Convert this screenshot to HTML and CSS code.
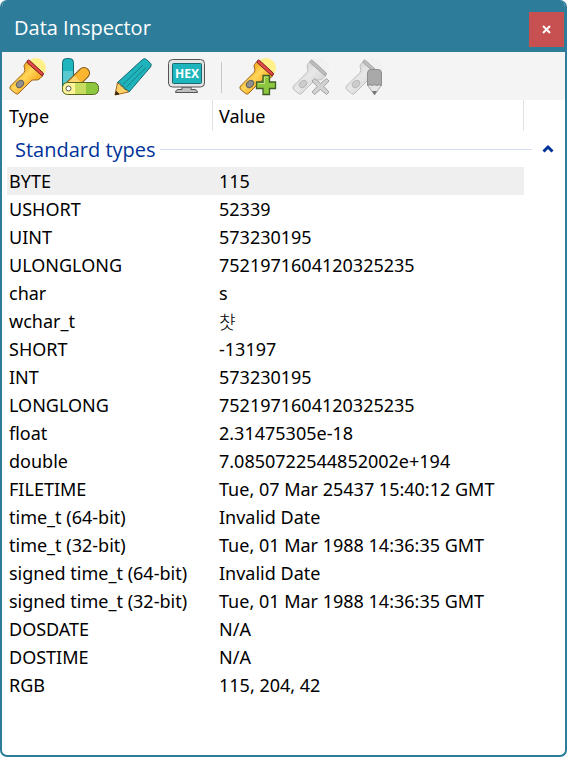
FILE: index.html
```
<!DOCTYPE html>
<html lang="en">
<head>
<meta charset="utf-8">
<title>Data Inspector</title>
<link rel="stylesheet" href="styles.css">
</head>
<body>
<svg class="defs" aria-hidden="true">
  <defs>
    <linearGradient id="gold" x1="0.2" y1="0.2" x2="0.8" y2="0.8">
      <stop offset="0.1" stop-color="#f6a81c"/>
      <stop offset="0.45" stop-color="#ffd65a"/>
      <stop offset="0.9" stop-color="#f8a51b"/>
    </linearGradient>
    <g id="torch">
      <circle class="glow" cx="29" cy="11" r="10"/>
      <path class="torch-body" d="M20 4.5 L17.5 7.5 Q16.500 9 17.500 11 Q18.500 13.500 17 15.500 L3.500 29 Q2 31 3.800 32.700 L8.500 36.500 Q10.500 38 12 36 L24 24 Q25.500 22.500 28 23 Q31 23.500 33 21.500 L35.500 19 Z"/>
      <path class="torch-rim" d="M20.500 3.500 Q21.500 2.500 22.700 3.500 L36 15.800 Q37 17 36 18.200 Q35 19 34 18 L20.500 6 Q19.500 5 20.500 3.500 Z"/>
      <ellipse class="torch-switch" cx="13" cy="27" rx="4" ry="3" transform="rotate(-40 13 27)"/>
    </g>
  </defs>
</svg>
<main class="window">
  <header class="titlebar">
    <h1 class="title">Data Inspector</h1>
    <button class="close" type="button" aria-label="Close">
      <svg width="11" height="9" viewBox="0 0 11 9"><path d="M2 1 L9 8 M9 1 L2 8"/></svg>
    </button>
  </header>
  <div class="toolbar" role="toolbar" aria-label="Inspector tools">
    <button class="tool" type="button" aria-label="Inspect">
      <svg viewBox="0 0 40 40"><use href="#torch"/></svg>
    </button>
    <button class="tool" type="button" aria-label="Colors">
      <svg viewBox="0 0 40 40">
        <rect x="2.500" y="1.500" width="11" height="35" rx="4" fill="#1eb5bd"/>
        <path d="M2.500 14 H13.500 V26 H2.500 Z" fill="#58c9cf"/>
        <rect x="2.500" y="1.500" width="11" height="35" rx="4" fill="none" stroke="#126a72"/>
        <g transform="rotate(-45 8 32)">
          <rect x="3" y="26.500" width="33" height="11" rx="5" fill="#fbb52f"/>
          <path d="M9 27 H22 V37 H9 Z" fill="#ffd36d"/>
          <rect x="3" y="26.500" width="33" height="11" rx="5" fill="none" stroke="#80551b"/>
        </g>
        <rect x="2.500" y="25.500" width="36" height="12" rx="5" fill="#8dc63f"/>
        <path d="M15 25.500 H26 V37.500 H15 Z" fill="#c8dc60"/>
        <path d="M15 25.500 V37.500 H7.500 Q2.500 37.500 2.500 32 Q2.500 25.500 7.500 25.500 Z" fill="#fff49a"/>
        <rect x="2.500" y="25.500" width="36" height="12" rx="5" fill="none" stroke="#55671f"/>
        <circle cx="8.500" cy="31.500" r="2.500" fill="#fff" stroke="#555"/>
      </svg>
    </button>
    <button class="tool" type="button" aria-label="Edit">
      <svg viewBox="0 0 40 40">
        <path d="M4.500 25.500 L2 38 L15.500 35 Z" fill="#fdd066" stroke="#a4671b"/>
        <path d="M3 34.500 L2.500 37.500 L6 37 Z" fill="#3b2314" stroke="#3b2314"/>
        <path d="M4.500 25.500 L29.500 2.500 Q31.500 .8 33.500 2.500 L37.500 6.200 Q39 8 37.500 10 L16 35 Q15 31.500 11.500 32 Q12 28.500 8.500 29 Q8.500 25.500 4.500 25.500 Z" fill="#1fb3bb" stroke="#176a70"/>
        <path d="M10 27.500 L30 8 M13 30.500 L33 10.500" fill="none" stroke="#147f87"/>
      </svg>
    </button>
    <button class="tool" type="button" aria-label="Hex view">
      <svg viewBox="0 0 40 40">
        <path d="M16 30 H25 V32.500 H29 Q31.500 33 31.500 35.500 H9.500 Q9.500 33 12 32.500 H16 Z" fill="#bfbfbf" stroke="#555"/>
        <rect x="2.500" y="2.500" width="36" height="27.500" rx="4" fill="#e3e3e3" stroke="#555"/>
        <rect x="6.500" y="6.500" width="29" height="20" rx="1" fill="#1eb5bd" stroke="#176a70"/>
        <text class="hex" x="21" y="21" text-anchor="middle">HEX</text>
      </svg>
    </button>
    <span class="separator"></span>
    <button class="tool" type="button" aria-label="Add type">
      <svg viewBox="0 0 40 40">
        <use href="#torch"/>
        <path d="M26 18.500 H32.500 V25 H38.500 V31.500 H32.500 V37.500 H26 V31.500 H19.500 V25 H26 Z" fill="#8dc63f" stroke="#3f5e25" stroke-width="1.300"/>
        <path d="M27.500 20 H31 M21 26.500 H27.500 V20" fill="none" stroke="#c0e382"/>
      </svg>
    </button>
    <button class="tool" type="button" aria-label="Delete type" disabled>
      <svg viewBox="0 0 40 40">
        <use href="#torch"/>
        <path d="M24.500 21.500 L30.500 26.500 L36.500 21.500 L39 24 L33.800 29.500 L39 35 L36.500 37.500 L30.500 32.500 L24.500 37.500 L22 35 L27.200 29.500 L22 24 Z" fill="#d2d2d2" stroke="#a3a3a3" stroke-linejoin="round"/>
      </svg>
    </button>
    <button class="tool" type="button" aria-label="Edit type" disabled>
      <svg viewBox="0 0 40 40">
        <use href="#torch"/>
        <path d="M24.500 28 L31.500 38 L38.500 28 Z" fill="#e6e6e6" stroke="#aaa"/>
        <path d="M29 34 H34 L31.500 38 Z" fill="#777"/>
        <path d="M24.500 28.500 V16 Q24.500 12.500 28 12.500 H35 Q38.500 12.500 38.500 16 V28.500 Q36 26 34 28.500 Q31.500 26 29 28.500 Q27 26 24.500 28.500 Z" fill="#a9a9a9" stroke="#8d8d8d"/>
      </svg>
    </button>
  </div>
  <div class="content">
    <table class="types">
      <colgroup><col class="col-type"><col><col class="col-end"></colgroup>
      <thead>
        <tr><th scope="col">Type</th><th scope="col">Value</th><td></td></tr>
      </thead>
      <tbody>
        <tr class="group"><th colspan="3" scope="rowgroup">
          <button class="group-toggle" type="button" aria-expanded="true">
            <span>Standard types</span><span class="rule"></span>
            <svg width="12" height="10" viewBox="0 0 12 10"><path d="M1.500 7.500 L6 3 L10.500 7.500"/></svg>
          </button>
        </th></tr>
        <tr class="selected"><td>BYTE</td><td>115</td></tr>
        <tr><td>USHORT</td><td>52339</td></tr>
        <tr><td>UINT</td><td>573230195</td></tr>
        <tr><td>ULONGLONG</td><td>7521971604120325235</td></tr>
        <tr><td>char</td><td>s</td></tr>
        <tr><td>wchar_t</td><td><span class="glyph" lang="ko">챳</span></td></tr>
        <tr><td>SHORT</td><td>-13197</td></tr>
        <tr><td>INT</td><td>573230195</td></tr>
        <tr><td>LONGLONG</td><td>7521971604120325235</td></tr>
        <tr><td>float</td><td>2.31475305e-18</td></tr>
        <tr><td>double</td><td>7.0850722544852002e+194</td></tr>
        <tr><td>FILETIME</td><td>Tue, 07 Mar 25437 15:40:12 GMT</td></tr>
        <tr><td>time_t (64-bit)</td><td>Invalid Date</td></tr>
        <tr><td>time_t (32-bit)</td><td>Tue, 01 Mar 1988 14:36:35 GMT</td></tr>
        <tr><td>signed time_t (64-bit)</td><td>Invalid Date</td></tr>
        <tr><td>signed time_t (32-bit)</td><td>Tue, 01 Mar 1988 14:36:35 GMT</td></tr>
        <tr><td>DOSDATE</td><td>N/A</td></tr>
        <tr><td>DOSTIME</td><td>N/A</td></tr>
        <tr><td>RGB</td><td>115, 204, 42</td></tr>
      </tbody>
    </table>
  </div>
</main>
</body>
</html>
```
FILE: styles.css
```
* { box-sizing: border-box; }

body {
  margin: 0;
  background: #fff;
  color: #000;
  font-family: "Open Sans", "Noto Sans", sans-serif;
  font-size: 20px;
}

button {
  border: 0;
  padding: 0;
  background: none;
  font: inherit;
  color: inherit;
}

.defs { position: absolute; width: 0; height: 0; }

.window {
  display: flex;
  flex-direction: column;
  min-height: 100vh;
  border: 2px solid #2d7d9a;
  border-top: 0;
  border-radius: 7px;
  background: #fff;
  overflow: hidden;
}

.titlebar {
  display: flex;
  align-items: center;
  justify-content: space-between;
  height: 52px;
  padding: 7px 1px 0 12px;
  background: #2d7d9a;
  color: #fff;
}

.title {
  margin: 0;
  padding-bottom: 4px;
  font-size: 20px;
  font-weight: 400;
  line-height: 28px;
}

.close {
  display: grid;
  place-items: center;
  width: 35px;
  height: 35px;
  background: #c75050;
}

.close path { fill: none; stroke: #fff; stroke-width: 2; }

.toolbar {
  display: flex;
  align-items: center;
  gap: 13px;
  height: 48px;
  padding: 2px 5px 0;
  background: #f4f4f4;
}

.tool { width: 40px; height: 40px; }
.tool svg { display: block; width: 40px; height: 40px; }

.separator {
  width: 1px;
  height: 31px;
  margin: 0 2px;
  background: #c8c8c8;
}

.glow { fill: #fff08a; }
.torch-body { fill: url(#gold); stroke: #9a6420; stroke-width: 1px; }
.torch-rim { fill: #e04848; stroke: #7c2020; }
.torch-switch { fill: #909090; stroke: #5e5e5e; }
.hex { fill: #fff; font-size: 12px; font-weight: 700; }

.tool:disabled use { filter: grayscale(1) opacity(0.4); }

.content { padding: 0 5px; }

.types {
  width: 100%;
  table-layout: fixed;
  border-collapse: separate;
  border-spacing: 0;
  font-family: "Noto Sans", sans-serif;
  font-size: 18px;
}

.col-type { width: 206px; }
.col-end { width: 36px; }

.types th, .types td {
  height: 28px;
  padding: 0 0 0 2px;
  font-weight: 400;
  line-height: 24px;
  text-align: left;
  white-space: nowrap;
}

.types td + td, .types th + th { padding-left: 6px; }

.types thead th {
  height: 31px;
  border-right: 1px solid #e2e2e2;
}

.types .group th { height: 36px; padding: 2px 6px 0 8px; }

.group-toggle {
  display: flex;
  align-items: center;
  width: 100%;
  color: #003399;
  font-family: "Open Sans", "Noto Sans", sans-serif;
  font-size: 20px;
  line-height: 28px;
}

.rule {
  flex: 1;
  height: 1px;
  margin: 0 10px 2px 4px;
  background: #d3dff0;
}

.group-toggle svg { margin-bottom: 2px; }
.group-toggle path { fill: none; stroke: #003399; stroke-width: 3; }

.selected td { background: #efefef; }

.glyph { font-family: "Noto Sans CJK KR", sans-serif; font-weight: 300; }
```
